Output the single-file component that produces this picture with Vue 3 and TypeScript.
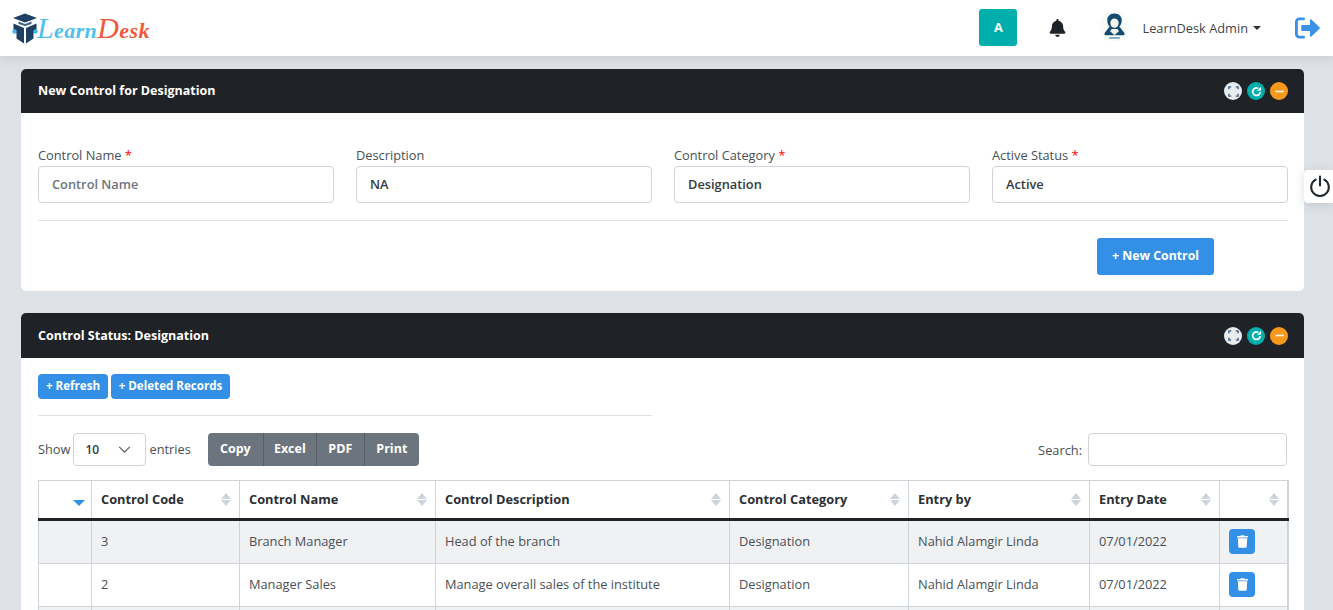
<script setup lang="ts">
interface ControlRow {
  code: string
  name: string
  description: string
  category: string
  entryBy: string
  entryDate: string
}

const fields = [
  { label: 'Control Name', required: true, value: '', placeholder: 'Control Name' },
  { label: 'Description', required: false, value: 'NA', placeholder: '' },
  { label: 'Control Category', required: true, value: 'Designation', placeholder: '' },
  { label: 'Active Status', required: true, value: 'Active', placeholder: '' },
]

const columns = ['', 'Control Code', 'Control Name', 'Control Description', 'Control Category', 'Entry by', 'Entry Date', '']

const rows: ControlRow[] = [
  { code: '3', name: 'Branch Manager', description: 'Head of the branch', category: 'Designation', entryBy: 'Nahid Alamgir Linda', entryDate: '07/01/2022' },
  { code: '2', name: 'Manager Sales', description: 'Manage overall sales of the institute', category: 'Designation', entryBy: 'Nahid Alamgir Linda', entryDate: '07/01/2022' },
]
</script>

<template>
  <div class="page">
    <header class="topbar">
      <div class="logo">
        <svg class="logo-mark" viewBox="0 0 26 31" aria-hidden="true">
          <path d="M13 0.500 L25 5 L13 9.500 L1 5 Z" fill="#1d3f63" />
          <path d="M6.500 8.500 L13 11 L19.500 8.500 V11 L13 13 L6.500 11 Z" fill="#3c6488" />
          <path d="M1.500 10.500 L12 15 V30.500 L4.500 25.500 V20 L1.500 18 Z" fill="#1d3f63" />
          <path d="M24.500 10.500 L14 15 V30.500 L21.500 25.500 V20 L24.500 18 Z" fill="#1d3f63" />
          <circle cx="2.500" cy="18.500" r="2.200" fill="#45b8e6" />
          <circle cx="23.500" cy="18.500" r="2.200" fill="#45b8e6" />
        </svg>
        <span class="logo-text"><span class="logo-learn"><b>L</b>earn</span><span class="logo-desk"><b>D</b>esk</span></span>
      </div>
      <div class="topbar-right">
        <span class="badge-a">A</span>
        <svg class="bell" viewBox="0 0 448 512" aria-hidden="true">
          <path fill="#1f2327" d="M224 512c35 0 64-29 64-64H160c0 35 29 64 64 64zm215-150c-19-21-55-52-55-154 0-78-54-140-128-155V32a32 32 0 0 0-64 0v21C118 68 64 130 64 208c0 102-36 133-55 154-6 6-9 14-9 22 0 16 13 32 32 32h384c19 0 32-16 32-32 0-8-3-16-9-22z" />
        </svg>
        <svg class="avatar" viewBox="0 0 32 32" aria-hidden="true">
          <circle cx="16" cy="16" r="15.500" fill="#f7fcfb" />
          <path d="M16 2.500c4.500 0 7.500 3 7.500 7 0 3-1 5-2.500 6.500l5 6.500c.8 1 .5 2.500-1 2.500H7c-1.500 0-1.800-1.500-1-2.500l5-6.500c-1.500-1.500-2.500-3.500-2.500-6.500 0-4 3-7 7.500-7z" fill="#124a70" />
          <ellipse cx="16" cy="12.500" rx="4.300" ry="4.800" fill="#f7f4f0" />
          <path d="M13 18.500h6l1.500 2.500-4.500 4-4.500-4z" fill="#f7f4f0" />
          <rect x="10.500" y="27" width="11" height="1.600" fill="#6f97b0" />
        </svg>
        <span class="user">LearnDesk Admin<i class="caret"></i></span>
        <svg class="logout" viewBox="0 0 28 24" aria-hidden="true">
          <path d="M10 2.500H5.500A3 3 0 0 0 2.500 5.500v13a3 3 0 0 0 3 3H10" fill="none" stroke="#3b91e5" stroke-width="3" stroke-linecap="round" />
          <path d="M8.500 9h8V3.800c0-.8.900-1.100 1.500-.6l8.500 8.100c.5.400.5 1.100 0 1.500L18 20.800c-.6.500-1.500.2-1.500-.6V15h-8a1 1 0 0 1-1-1v-4a1 1 0 0 1 1-1z" fill="#3b91e5" />
        </svg>
      </div>
    </header>

    <main class="content">
      <section class="card">
        <div class="card-head">
          <h2>New Control for Designation</h2>
          <div class="tools">
            <span class="tool tool-light">
              <svg viewBox="0 0 12 12"><path d="M1 3.500V1h2.500M8.500 1H11v2.500M11 8.500V11H8.500M3.500 11H1V8.500" fill="none" stroke="#3d5f80" stroke-width="1.500" /></svg>
            </span>
            <span class="tool tool-teal">
              <svg viewBox="0 0 12 12"><path d="M10 6.500A4.100 4.100 0 1 1 8 2.700" fill="none" stroke="#fff" stroke-width="1.900" /><path d="M6.500 5.400 11 5V0.800z" fill="#fff" /></svg>
            </span>
            <span class="tool tool-orange">
              <svg viewBox="0 0 12 12"><path d="M1.500 6h9" stroke="#fff" stroke-width="1.700" /></svg>
            </span>
          </div>
        </div>
        <div class="card-body form-body">
          <div class="form-grid">
            <div v-for="field in fields" :key="field.label" class="field">
              <label>{{ field.label }} <span v-if="field.required" class="req">*</span></label>
              <input type="text" :value="field.value" :placeholder="field.placeholder" />
            </div>
          </div>
          <hr class="rule" />
          <div class="form-actions">
            <button type="button" class="btn-primary">+ New Control</button>
          </div>
        </div>
      </section>

      <section class="card">
        <div class="card-head card-head--tall">
          <h2>Control Status: Designation</h2>
          <div class="tools">
            <span class="tool tool-light">
              <svg viewBox="0 0 12 12"><path d="M1 3.500V1h2.500M8.500 1H11v2.500M11 8.500V11H8.500M3.500 11H1V8.500" fill="none" stroke="#3d5f80" stroke-width="1.500" /></svg>
            </span>
            <span class="tool tool-teal">
              <svg viewBox="0 0 12 12"><path d="M10 6.500A4.100 4.100 0 1 1 8 2.700" fill="none" stroke="#fff" stroke-width="1.900" /><path d="M6.500 5.400 11 5V0.800z" fill="#fff" /></svg>
            </span>
            <span class="tool tool-orange">
              <svg viewBox="0 0 12 12"><path d="M1.500 6h9" stroke="#fff" stroke-width="1.700" /></svg>
            </span>
          </div>
        </div>
        <div class="card-body table-body">
          <div class="quick-actions">
            <button type="button" class="btn-small">+ Refresh</button>
            <button type="button" class="btn-small">+ Deleted Records</button>
          </div>
          <hr class="rule rule--half" />
          <div class="table-tools">
            <div class="length">
              <span>Show</span>
              <span class="select">10
                <svg viewBox="0 0 14 8"><path d="M1 1l6 6 6-6" fill="none" stroke="#555c63" stroke-width="1.400" /></svg>
              </span>
              <span>entries</span>
              <div class="export">
                <span>Copy</span><span>Excel</span><span>PDF</span><span>Print</span>
              </div>
            </div>
            <div class="search">
              <span>Search:</span>
              <input type="text" />
            </div>
          </div>
          <table>
            <colgroup>
              <col style="width: 53px" /><col style="width: 148px" /><col style="width: 196px" /><col style="width: 294px" />
              <col style="width: 179px" /><col style="width: 181px" /><col style="width: 130px" /><col style="width: 68px" />
            </colgroup>
            <thead>
              <tr>
                <th v-for="(col, i) in columns" :key="i">
                  {{ col }}
                  <i v-if="i === 0" class="sort-active"></i>
                  <span v-else class="sort"><i class="up"></i><i class="down"></i></span>
                </th>
              </tr>
            </thead>
            <tbody>
              <tr v-for="row in rows" :key="row.code">
                <td></td>
                <td>{{ row.code }}</td>
                <td>{{ row.name }}</td>
                <td>{{ row.description }}</td>
                <td>{{ row.category }}</td>
                <td>{{ row.entryBy }}</td>
                <td>{{ row.entryDate }}</td>
                <td>
                  <button type="button" class="btn-trash" aria-label="Delete">
                    <svg viewBox="0 0 448 512"><path fill="#fff" d="M432 32H312l-9-19A24 24 0 0 0 281 0H167a24 24 0 0 0-22 13l-9 19H16A16 16 0 0 0 0 48v32a16 16 0 0 0 16 16h416a16 16 0 0 0 16-16V48a16 16 0 0 0-16-16zM53 467a48 48 0 0 0 48 45h246a48 48 0 0 0 48-45l21-339H32z" /></svg>
                  </button>
                </td>
              </tr>
              <tr>
                <td v-for="n in 8" :key="n"></td>
              </tr>
            </tbody>
          </table>
        </div>
      </section>
    </main>

    <button type="button" class="power" aria-label="Power">
      <svg viewBox="0 0 20 20"><path d="M6 4.200a8 8 0 1 0 8 0" fill="none" stroke="#23282d" stroke-width="1.900" stroke-linecap="round" /><path d="M10 1.500v8" stroke="#23282d" stroke-width="1.900" stroke-linecap="round" /></svg>
    </button>
  </div>
</template>

<style>
html,
body {
  height: 100%;
  margin: 0;
  overflow: hidden;
}
</style>

<style scoped>
.page {
  background: #dee2e6;
  color: #495057;
  font-family: "Open Sans", "Liberation Sans", sans-serif;
  font-size: 12.8px;
  height: 610px;
  overflow: hidden;
  position: relative;
}

.topbar {
  align-items: center;
  background: #ffffff;
  box-shadow: 0 2px 10px rgba(60, 70, 80, 0.14);
  display: flex;
  height: 56px;
  justify-content: space-between;
  padding: 0 12px;
  position: relative;
}

.logo {
  align-items: center;
  display: flex;
}

.logo-mark {
  height: 31px;
  width: 26px;
}

.logo-text {
  font-family: "Liberation Serif", serif;
  font-size: 22px;
  font-style: italic;
  font-weight: 700;
  letter-spacing: 0.4px;
  line-height: 1;
  margin-left: -1px;
}

.logo-text b {
  font-size: 30px;
  font-weight: 400;
}

.logo-learn {
  color: #4fc0ee;
}

.logo-desk {
  color: #ee5a3c;
}

.topbar-right {
  align-items: center;
  display: flex;
}

.badge-a {
  align-items: center;
  background: #00aeab;
  border-radius: 3px;
  color: #ffffff;
  display: flex;
  font-size: 12.800px;
  font-weight: 700;
  height: 37px;
  justify-content: center;
  margin: -2px 32px 0 0;
  width: 38px;
}

.bell {
  height: 18px;
  margin-right: 33px;
  width: 17px;
}

.avatar {
  height: 31px;
  margin: -4px 12px 0 0;
  width: 31px;
}

.user {
  align-items: center;
  color: #3f454b;
  display: flex;
  font-size: 12.800px;
  margin-right: 33px;
}

.caret {
  border-left: 4.500px solid transparent;
  border-right: 4.500px solid transparent;
  border-top: 4.500px solid #2a2f34;
  margin-left: 5px;
}

.logout {
  height: 24px;
  width: 27px;
}

.content {
  display: flex;
  flex-direction: column;
  gap: 22px;
  padding: 13px 29px 0 21px;
}

.card {
  background: #ffffff;
  border-radius: 5px;
  overflow: hidden;
}

.card-head {
  align-items: center;
  background: #1f2327;
  display: flex;
  height: 44px;
  justify-content: space-between;
  padding: 0 16px 0 17px;
}

.card-head--tall {
  height: 45px;
}

.card-head h2 {
  color: #ffffff;
  font-size: 12.500px;
  font-weight: 700;
  margin: -2px 0 0;
}

.card-head--tall h2 {
  margin-top: 0;
}

.tools {
  display: flex;
  gap: 5px;
}

.tool {
  align-items: center;
  border-radius: 50%;
  display: flex;
  height: 18px;
  justify-content: center;
  width: 18px;
}

.tool svg {
  height: 11px;
  width: 11px;
}

.tool-light {
  background: #e9ecef;
}

.tool-teal {
  background: #00aeab;
}

.tool-orange {
  background: #f7991c;
}

.form-body {
  box-sizing: border-box;
  height: 178px;
  padding: 33px 16px 0 17px;
}

.form-grid {
  display: grid;
  gap: 22px;
  grid-template-columns: repeat(4, 296px);
}

.field label {
  color: #495057;
  display: block;
  font-size: 12.800px;
  line-height: 18px;
  margin-bottom: 2px;
}

.req {
  color: #f00;
  font-size: 13px;
}

.field input,
.search input {
  background: #ffffff;
  border: 1px solid #ced4da;
  border-radius: 4px;
  box-sizing: border-box;
  color: #343a40;
  font-family: inherit;
  font-size: 12.800px;
  font-weight: 600;
  height: 37px;
  outline: none;
  padding: 0 13px 2px;
  width: 100%;
}

.field input::placeholder {
  color: #6c757d;
  opacity: 1;
}

.rule {
  border: 0;
  border-top: 1px solid #dee2e6;
  margin: 17px 0;
}

.form-actions {
  display: flex;
  justify-content: flex-end;
  padding-right: 74px;
}

.btn-primary {
  background: #3490e6;
  border: 0;
  border-radius: 3px;
  color: #ffffff;
  font-family: inherit;
  font-size: 12.300px;
  font-weight: 700;
  height: 37px;
  padding: 0 0 2px;
  width: 117px;
}

.table-body {
  box-sizing: border-box;
  height: 260px;
  padding: 16px 16px 0 17px;
}

.quick-actions {
  display: flex;
  gap: 3px;
}

.btn-small {
  background: #3490e6;
  border: 0;
  border-radius: 4px;
  color: #ffffff;
  font-family: inherit;
  font-size: 11.600px;
  font-weight: 700;
  height: 25px;
  padding: 0 7px 2px;
}

.btn-small:first-child {
  width: 70px;
}

.btn-small:last-child {
  width: 119px;
}

.rule--half {
  margin: 16px 0 17px;
  width: 614px;
}

.table-tools {
  align-items: center;
  display: flex;
  justify-content: space-between;
  margin-bottom: 14px;
  padding-right: 1px;
}

.length {
  align-items: center;
  display: flex;
  gap: 3px;
}

.length > span:not(.select) {
  padding-bottom: 1px;
}

.select {
  align-items: center;
  border: 1px solid #ced4da;
  border-radius: 4px;
  box-sizing: border-box;
  color: #343a40;
  display: flex;
  font-size: 12px;
  font-weight: 600;
  height: 33px;
  justify-content: space-between;
  padding: 0 14px 0 11px;
  width: 73px;
}

.select svg {
  height: 7px;
  width: 13px;
}

.export {
  border-radius: 4px;
  display: flex;
  margin-left: 14px;
  overflow: hidden;
}

.export span {
  align-items: center;
  background: #6c757d;
  border-left: 1px solid #565e66;
  box-sizing: border-box;
  color: #ffffff;
  display: flex;
  font-size: 12.500px;
  font-weight: 700;
  height: 33px;
  justify-content: center;
  padding-bottom: 2px;
  width: 53px;
}

.export span:first-child {
  border-left: 0;
  width: 55px;
}

.export span:nth-child(3) {
  width: 48px;
}

.export span:last-child {
  width: 55px;
}

.search {
  align-items: center;
  display: flex;
  gap: 6px;
}

.search input {
  height: 33px;
  width: 199px;
}

table {
  border-collapse: collapse;
  border: 1px solid #ced4da;
  table-layout: fixed;
  width: 1249px;
}

th,
td {
  border: 1px solid #ced4da;
  box-sizing: border-box;
  text-align: left;
}

th:last-child,
td:last-child {
  border-right-width: 2px;
}

th {
  border-bottom: 3px solid #1f2327;
  color: #2b3035;
  font-size: 12.800px;
  font-weight: 700;
  height: 39px;
  padding: 0 9px 2px;
  position: relative;
}

td {
  color: #495057;
  font-size: 12.800px;
  height: 43px;
  padding: 0 9px 2px;
}

tbody tr:first-child td {
  height: 44px;
}

tbody tr:nth-child(odd) td {
  background: #f0f1f3;
}

.sort {
  display: flex;
  flex-direction: column;
  gap: 1px;
  position: absolute;
  right: 8px;
  top: 12px;
}

.sort i {
  border-left: 5.500px solid transparent;
  border-right: 5.500px solid transparent;
  display: block;
  height: 0;
  width: 0;
}

.sort .up {
  border-bottom: 6px solid #ced4da;
}

.sort .down {
  border-top: 6px solid #ced4da;
}

.sort-active {
  border-left: 6px solid transparent;
  border-right: 6px solid transparent;
  border-top: 6px solid #3490e6;
  position: absolute;
  right: 6px;
  top: 19px;
}

.btn-trash {
  align-items: center;
  background: #3490e6;
  border: 0;
  border-radius: 4px;
  display: flex;
  height: 25px;
  justify-content: center;
  padding: 0;
  width: 26px;
}

.btn-trash svg {
  height: 13px;
  width: 11px;
}

.power {
  align-items: center;
  background: #ffffff;
  border: 0;
  border-radius: 4px 0 0 4px;
  box-shadow: 0 2px 10px rgba(60, 70, 80, 0.18);
  display: flex;
  height: 33px;
  justify-content: center;
  padding: 0 0 1px 3px;
  position: absolute;
  right: 0;
  top: 170px;
  width: 29px;
}

.power svg {
  flex: 0 0 auto;
  height: 22px;
  width: 22px;
}
</style>
